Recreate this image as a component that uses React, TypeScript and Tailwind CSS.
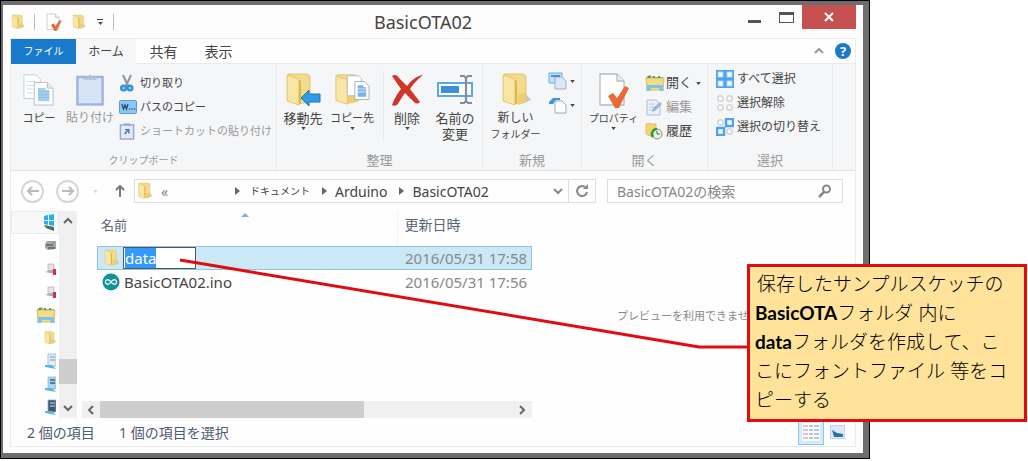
import { useEffect, useRef, type ReactNode } from 'react'
import clsx from 'clsx'

const ui = "font-['Noto_Sans','Noto_Sans_CJK_JP',sans-serif]"

const tabs = ['ホーム', '共有', '表示']

const files = [
  { name: 'data', date: '2016/05/31 17:58', folder: true },
  { name: 'BasicOTA02.ino', date: '2016/05/31 17:56', folder: false },
]

/* ---------- Icons ---------- */

function FolderShape() {
  return (
    <>
      <path d="M3 2h19l3 2v26l-12 2z" fill="#f2db8b" stroke="#d9b95c" strokeWidth=".7" />
      <path d="M12 7l4 2v22l-4 2z" fill="#d9b44a" />
      <path d="M2 3l9 3c2 1 3 2 3 4v23L2 29z" fill="#f9e6a4" stroke="#dcbc5e" strokeWidth=".8" />
    </>
  )
}

function Folder({ className }: { className?: string }) {
  return (
    <svg viewBox="0 0 30 36" className={className} aria-hidden="true">
      <path d="M18 33l12-5-6-7z" fill="#a9a9a9" opacity=".6" />
      <FolderShape />
      <path d="M17 23l8-3v9l-8 4z" fill="#eccf70" />
    </svg>
  )
}

function Page({ className, check }: { className?: string; check?: boolean }) {
  return (
    <svg viewBox="0 0 34 36" className={className} aria-hidden="true">
      <path d="M3 2h17l7 7v24H3z" fill="#fff" stroke="#b5bac2" strokeWidth="1.3" />
      <path d="M20 2v7h7" fill="#e9edf2" stroke="#b5bac2" strokeWidth="1.3" />
      {check && <path d="M11 24l5-3 4 5 8-12 4 2-10 20h-4z" fill="#e8693a" />}
    </svg>
  )
}

function CopyIcon() {
  return (
    <svg viewBox="0 0 34 34" className="h-8 w-8" aria-hidden="true">
      <path d="M1 1h13l5 5v20H1z" fill="#fff" stroke="#c4ccd6" />
      <path d="M4 8h9M4 12h9M4 16h7M4 20h7" stroke="#d2d8df" />
      <path d="M12 9h14l6 6v18H12z" fill="#fff" stroke="#b4bdc9" />
      <path d="M26 9v6h6" fill="#e6ebf1" stroke="#b4bdc9" />
      <path d="M16 15h8v2h4v12H16z" fill="#a5cdec" />
      <path d="M16 19h12M16 22h12M16 25h12" stroke="#8fbee2" />
    </svg>
  )
}

function PasteIcon() {
  return (
    <svg viewBox="0 0 30 34" className="h-8 w-7" aria-hidden="true">
      <rect x="1.5" y="3" width="27" height="29.500" fill="#d7e3f7" stroke="#9fb2d9" strokeWidth="2.500" />
      <path d="M8 6V3h4l3-3 3 3h4v3z" fill="#b4c0d8" />
    </svg>
  )
}

function Scissors() {
  return (
    <svg viewBox="0 0 16 18" className="h-[18px] w-4" aria-hidden="true">
      <path d="M4 1l5 11M12 1L7 12" stroke="#8797a8" strokeWidth="2" />
      <circle cx="4.500" cy="14" r="2.500" fill="#8ac8f0" stroke="#2f8fd4" strokeWidth="2" />
      <circle cx="11" cy="14" r="2.500" fill="#8ac8f0" stroke="#2f8fd4" strokeWidth="2" />
    </svg>
  )
}

function PathIcon() {
  return (
    <svg viewBox="0 0 18 14" className="h-[14px] w-[18px]" aria-hidden="true">
      <rect x=".5" y=".5" width="17" height="13" rx="1" fill="#8cc6f3" stroke="#5a9bd3" />
      <path d="M3 4l1.500 5L6 5l1.500 4L9 4" fill="none" stroke="#28435f" strokeWidth="1.2" />
      <path d="M10 9h1.500M12.500 9H14M15 9h1.500" stroke="#28435f" strokeWidth="1.2" />
    </svg>
  )
}

function ShortcutIcon() {
  return (
    <svg viewBox="0 0 16 18" className="h-[17px] w-4" aria-hidden="true">
      <rect x="1" y="2" width="14" height="15" fill="#e3eaf7" stroke="#96a8cf" strokeWidth="1.5" />
      <path d="M5 2V1h6v1z" fill="#96a8cf" stroke="#96a8cf" />
      <path d="M6 12c0-2 1-3 3-4M6 7h4v4" fill="none" stroke="#4e6fa8" strokeWidth="1.5" />
    </svg>
  )
}

function MoveTo() {
  return (
    <svg viewBox="0 0 36 36" className="h-9 w-9" aria-hidden="true">
      <FolderShape />
      <path d="M16 26l8-8v4h11v8H24v4z" fill="#2f9be6" stroke="#1a74b8" />
    </svg>
  )
}

function CopyTo() {
  return (
    <svg viewBox="0 0 38 36" className="h-9 w-9" aria-hidden="true">
      <FolderShape />
      <path d="M14 24h13v5l-13 4z" fill="#ecce70" />
      <path d="M14 3h12l3 3v18H14z" fill="#fff" stroke="#b4bdc9" />
      <path d="M22 9h10l5 5v14H22z" fill="#fff" stroke="#a7b0bd" />
      <path d="M25 13h6v2h3v10h-9z" fill="#7db4e6" />
      <path d="M25 17h9M25 20h9" stroke="#fff" strokeWidth=".7" />
    </svg>
  )
}

function DeleteIcon() {
  return (
    <svg viewBox="0 0 36 36" className="h-9 w-9" aria-hidden="true">
      <path d="M3 4c3-2 5-1 7 2l8 8c4-5 9-10 16-11-5 4-9 8-13 14l10 13c-2 2-4 2-6 0l-9-9c-3 4-5 8-8 12-2 1-4 1-5 0 2-6 5-11 9-16z" fill="#d2342a" />
    </svg>
  )
}

function RenameIcon() {
  return (
    <svg viewBox="0 0 36 32" className="h-8 w-9" aria-hidden="true">
      <rect x="1" y="9" width="34" height="13" fill="#fff" stroke="#5aa9e4" strokeWidth="2" />
      <rect x="4" y="12" width="18" height="7" fill="#3f8fd6" />
      <path d="M23 2h4l2 2 2-2h4M29 3v26M23 29h4l2-2 2 2h4" fill="none" stroke="#858c95" strokeWidth="2.200" />
    </svg>
  )
}

function NewItem({ plain }: { plain?: boolean }) {
  return (
    <svg viewBox="0 0 20 18" className="h-[18px] w-5" aria-hidden="true">
      {plain ? (
        <path d="M1 6l4-4h7v2H8L5 8H1z" fill="#3b94dc" />
      ) : (
        <path d="M1 1h13v10H1z" fill="#bfe0f5" stroke="#6aaee0" />
      )}
      <path d="M7 5h7l4 4v8H7z" fill={plain ? '#fff' : '#dbe8f3'} stroke="#a0abb8" />
      {!plain && <path d="M3 4h9" stroke="#3b94dc" strokeWidth="2" />}
    </svg>
  )
}

function OpenIcon() {
  return (
    <svg viewBox="0 0 20 18" className="h-[18px] w-5" aria-hidden="true">
      <path d="M1 3l4-2 3 2h10v3H1z" fill="#a3b08a" />
      <path d="M1 4h18l-1 12H2z" fill="#f3dd83" stroke="#cfb254" strokeWidth=".8" />
      <path d="M3 3h2M8 3h2M13 3h2" stroke="#3f7f57" strokeWidth="1.5" />
      <path d="M2 11h16v3l1 3h-4l-1-3H6l-1 3H1l1-3z" fill="#7cc5ea" />
    </svg>
  )
}

function EditIcon() {
  return (
    <svg viewBox="0 0 18 18" className="h-[18px] w-[18px]" aria-hidden="true">
      <path d="M2 2h9l4 4v11H2z" fill="#eaf1f9" stroke="#a9bdd6" />
      <path d="M4 6h6M4 9h5M4 12h4" stroke="#b6c8de" />
      <path d="M7 14l1-4 7-6 2 2-7 7z" fill="#9fb5d0" />
    </svg>
  )
}

function HistoryIcon() {
  return (
    <svg viewBox="0 0 18 18" className="h-[18px] w-[18px]" aria-hidden="true">
      <path d="M1 2l4-1 1 1h5v11l-6 1-4-2z" fill="#f1d56f" stroke="#d6b450" strokeWidth=".7" />
      <circle cx="12" cy="12" r="5" fill="#e8f2ea" stroke="#7f9a86" />
      <path d="M12 7a5 5 0 0 0-4 8" fill="none" stroke="#29a03a" strokeWidth="2.500" />
      <path d="M12 9v3h3" fill="none" stroke="#4f6557" />
    </svg>
  )
}

function SelectIcon({ kind }: { kind: 'all' | 'none' | 'invert' }) {
  const cells = [
    [1, 1],
    [10, 1],
    [1, 10],
    [10, 10],
  ]
  return (
    <svg viewBox="0 0 18 18" className="h-[18px] w-[18px]" aria-hidden="true">
      {kind === 'all' && <rect width="18" height="18" fill="#4ba3f5" />}
      {cells.map(([x, y], i) => {
        const on = kind === 'invert' && (i === 1 || i === 2)
        if (on) return <rect key={i} x={x} y={y} width="7" height="7" fill="#fff" stroke="#4ba3f5" strokeWidth="2.500" />
        if (kind === 'all') return <rect key={i} x={x + 1} y={y + 1} width="5" height="5" fill="#fff" stroke="#a9d3fa" />
        return <rect key={i} x={x + 1} y={y + 1} width="5" height="5" rx="1" fill="#fff" stroke="#bcbcbc" />
      })}
    </svg>
  )
}

function Chevron({ dir, className }: { dir: 'up' | 'down' | 'left' | 'right'; className?: string }) {
  const d = {
    up: 'M2 8l4-4 4 4',
    down: 'M2 4l4 4 4-4',
    left: 'M8 2L4 6l4 4',
    right: 'M4 2l4 4-4 4',
  }[dir]
  return (
    <svg viewBox="0 0 12 12" className={clsx('h-3 w-3 shrink-0', className)} aria-hidden="true">
      <path d={d} fill="none" stroke="currentColor" strokeWidth="2" />
    </svg>
  )
}

function Caret({ className }: { className?: string }) {
  return (
    <svg viewBox="0 0 6 4" className={clsx('h-[3px] w-[5px] shrink-0', className)} aria-hidden="true">
      <path d="M0 0h6L3 4z" fill="#444" />
    </svg>
  )
}

function Crumb() {
  return (
    <svg viewBox="0 0 5 8" className="h-2 w-[5px] shrink-0" aria-hidden="true">
      <path d="M0 0l5 4-5 4z" fill="#666" />
    </svg>
  )
}

function ArduinoIcon() {
  return (
    <svg viewBox="0 0 18 18" className="h-[18px] w-[18px]" aria-hidden="true">
      <circle cx="9" cy="9" r="8.500" fill="#129299" />
      <path d="M9 9C7.500 6.500 3.500 5.500 3.500 9S7.500 11.500 9 9s5.500-3.500 5.500 0S10.500 11.500 9 9z" fill="none" stroke="#e4f5f5" strokeWidth="1.3" />
    </svg>
  )
}

function DriveIcon({ kind }: { kind: string }) {
  return (
    <svg viewBox="0 0 12 18" className="h-[18px] w-3" aria-hidden="true">
      {kind === 'pc' && (
        <>
          <path d="M1 2l4-1v5H1zM6 1l5-1v6H6zM1 7h4v4l-4-1zM6 7h5v5l-5-1z" fill="#24b1ee" />
          <path d="M1 11l10 2v4L3 14z" fill="#4d6b62" />
        </>
      )}
      {kind === 'disk' && (
        <>
          <path d="M1 7l2-3h9v8l-8 1-3-2z" fill="#a4a7a8" />
          <path d="M2 8h7M4 11h7" stroke="#5c6161" strokeWidth="1.5" />
          <path d="M8 6h3" stroke="#7cae62" strokeWidth="1.5" />
        </>
      )}
      {kind === 'net' && (
        <>
          <path d="M4 4h6v7H4z" fill="#e7e1e3" stroke="#b7afb2" strokeWidth=".7" />
          <path d="M1 12l6-2h5v4z" fill="#a9adb0" />
          <path d="M9 9h3v6H9z" fill="#c9324c" />
        </>
      )}
      {(kind === 'doc' || kind === 'img' || kind === 'dev') && (
        <>
          <path d="M4 2h8v12H4z" fill={kind === 'doc' ? '#e3ecf5' : kind === 'img' ? '#a9d6ee' : '#46596b'} stroke="#8eb0ca" strokeWidth=".7" />
          <path d="M6 5h5M6 8h5" stroke={kind === 'img' ? '#35607f' : '#8fb6d8'} strokeWidth="1.500" />
          <path d="M1 13h7l4 4-11-2z" fill="#5fb4e4" />
        </>
      )}
    </svg>
  )
}

/* ---------- Ribbon ---------- */

type GroupProps = { label: string; className: string; small?: boolean; children: ReactNode }

function Group({ label, className, small, children }: GroupProps) {
  return (
    <section className={clsx('flex shrink-0 flex-col border-r border-[#e9eaeb] pt-[7px] pb-0.5', className)}>
      <div className="flex flex-1">{children}</div>
      <h2 className={clsx('text-center leading-4 text-[#999]', small ? 'text-[10px]' : 'text-[13px]')}>{label}</h2>
    </section>
  )
}

type BigProps = { icon: ReactNode; lines: string[]; className: string; text?: string; caret?: boolean; disabled?: boolean }

function Big({ icon, lines, className, text = 'text-[13px]', caret, disabled }: BigProps) {
  return (
    <button type="button" disabled={disabled} className={clsx('flex shrink-0 flex-col items-center whitespace-nowrap', className)}>
      <span className="flex h-[38px] items-center">{icon}</span>
      {lines.map((line) => (
        <span key={line} className={clsx('h-4 leading-[18px]', line === 'フォルダー' ? 'text-[10px]' : text, disabled ? 'text-[#999]' : 'text-[#444]')}>
          {line}
        </span>
      ))}
      {caret && <Caret className="mt-0.5" />}
    </button>
  )
}

type SmallProps = { icon: ReactNode; label: string; text?: string; caret?: boolean; disabled?: boolean }

function Small({ icon, label, text = 'text-[12px]', caret, disabled }: SmallProps) {
  return (
    <button type="button" disabled={disabled} className={clsx('flex h-6 items-center whitespace-nowrap', text, disabled ? 'text-[#999]' : 'text-[#444]')}>
      <span className="flex w-[21px] shrink-0">{icon}</span>
      {label}
      {caret && <Caret className="ml-1" />}
    </button>
  )
}

function Ribbon() {
  return (
    <div className="flex h-[107px] overflow-hidden border-b border-[#e3e4e5] bg-[#f5f6f7]">
      <Group label="クリップボード" small className="w-[266px]">
        <Big icon={<CopyIcon />} lines={['コピー']} text="text-[11px]" className="w-[56px]" />
        <Big icon={<PasteIcon />} lines={['貼り付け']} text="text-[12px]" disabled className="w-[46px]" />
        <div className="flex flex-col pl-1.5">
          <Small icon={<Scissors />} label="切り取り" text="text-[11px]" />
          <Small icon={<PathIcon />} label="パスのコピー" text="text-[11px]" />
          <Small icon={<ShortcutIcon />} label="ショートカットの貼り付け" text="text-[11px]" disabled />
        </div>
      </Group>
      <Group label="整理" className="w-[206px]">
        <Big icon={<MoveTo />} lines={['移動先']} caret className="w-[52px]" />
        <Big icon={<CopyTo />} lines={['コピー先']} text="text-[11px]" caret className="w-[46px]" />
        <div className="ml-2 h-[68px] border-l border-[#e6e7e8]" />
        <Big icon={<DeleteIcon />} lines={['削除']} caret className="w-[46px]" />
        <Big icon={<RenameIcon />} lines={['名前の', '変更']} className="w-[50px]" />
      </Group>
      <Group label="新規" className="w-[99px]">
        <Big icon={<Folder className="h-9 w-[30px]" />} lines={['新しい', 'フォルダー']} text="text-[12px]" className="w-[65px]" />
        <div className="flex flex-col">
          <button type="button" aria-label="新しいアイテム" className="flex h-5 items-center gap-0.5">
            <NewItem />
            <Caret />
          </button>
          <button type="button" aria-label="ショートカット" className="mt-1 flex h-5 items-center gap-0.5">
            <NewItem plain />
            <Caret />
          </button>
        </div>
      </Group>
      <Group label="開く" className="w-[126px]">
        <Big icon={<Page check className="h-9 w-[34px]" />} lines={['プロパティ']} text="text-[10px]" caret className="w-[63px]" />
        <div className="flex flex-col">
          <Small icon={<OpenIcon />} label="開く" text="text-[13px]" caret />
          <Small icon={<EditIcon />} label="編集" text="text-[13px]" disabled />
          <Small icon={<HistoryIcon />} label="履歴" text="text-[13px]" />
        </div>
      </Group>
      <Group label="選択" className="w-[125px]">
        <div className="-mt-1 flex flex-col pl-2">
          <Small icon={<SelectIcon kind="all" />} label="すべて選択" />
          <Small icon={<SelectIcon kind="none" />} label="選択解除" />
          <Small icon={<SelectIcon kind="invert" />} label="選択の切り替え" />
        </div>
      </Group>
    </div>
  )
}

/* ---------- Window parts ---------- */

function TitleBar() {
  return (
    <header className="flex h-[33px]">
      <div className="flex w-[104px] items-center">
        <Folder className="h-4 w-4" />
        <span className="ml-2 h-4 border-l border-[#bbb]" />
        <Page check className="ml-2.5 h-[18px] w-[18px]" />
        <Folder className="ml-2 h-4 w-4" />
        <button type="button" aria-label="クイック アクセスのカスタマイズ" className="ml-2.5 flex flex-col items-center gap-0.5">
          <span className="w-1.5 border-t border-[#444]" />
          <Caret />
        </button>
        <span className="ml-auto h-4 border-l border-[#bbb]" />
      </div>
      <h1 className="flex flex-1 items-center justify-center text-[18px] leading-6 text-[#444]">BasicOTA02</h1>
      <div className="flex w-[124px] items-start justify-end">
        <button type="button" aria-label="最小化" className="flex h-6 w-[31px] items-center justify-center pt-2">
          <span className="h-[3px] w-[13px] bg-[#555]" />
        </button>
        <button type="button" aria-label="最大化" className="flex h-6 w-8 items-center justify-center">
          <span className="h-[11px] w-[15px] border border-t-[3px] border-[#555]" />
        </button>
        <button type="button" aria-label="閉じる" className="flex h-6 w-[54px] items-center justify-center bg-[#c75050]">
          <svg viewBox="0 0 10 10" className="h-2.5 w-2.5" aria-hidden="true">
            <path d="M1 1l8 8M9 1L1 9" stroke="#fff" strokeWidth="2" />
          </svg>
        </button>
      </div>
    </header>
  )
}

function Tabs() {
  return (
    <nav className="flex h-[25px] items-stretch text-[#444]">
      <button type="button" className="w-[65px] bg-[#1979ca] text-[10px] text-white">
        ファイル
      </button>
      {tabs.map((tab, i) => (
        <button
          key={tab}
          type="button"
          className={clsx(
            i === 0 ? 'w-[60px] bg-[#f5f6f7] text-[12px]' : 'w-[55px] border-b border-[#e9eaeb] text-[14px]'
          )}
        >
          {tab}
        </button>
      ))}
      <div className="flex flex-1 items-center justify-end gap-2.5 border-b border-[#e9eaeb] pr-1">
        <button type="button" aria-label="リボンの最小化" className="text-[#999]">
          <Chevron dir="up" />
        </button>
        <button type="button" aria-label="ヘルプ" className="h-4 w-4 rounded-full bg-[#1979ca] text-[13px] leading-4 font-bold text-white">
          ?
        </button>
      </div>
    </nav>
  )
}

function AddressBar() {
  return (
    <div className="flex h-10 items-center pr-3 pl-2.5 text-[14px] text-[#444]">
      <button type="button" aria-label="戻る" className="flex h-[23px] w-[23px] items-center justify-center rounded-full border-2 border-[#d6d6d6] text-[#bbb]">
        <svg viewBox="0 0 12 12" className="h-3 w-3" aria-hidden="true">
          <path d="M12 6H1M5 2L1 6l4 4" fill="none" stroke="currentColor" strokeWidth="2" />
        </svg>
      </button>
      <button type="button" aria-label="進む" className="ml-3 flex h-[23px] w-[23px] items-center justify-center rounded-full border-2 border-[#d6d6d6] text-[#bbb]">
        <svg viewBox="0 0 12 12" className="h-3 w-3" aria-hidden="true">
          <path d="M0 6h11M7 2l4 4-4 4" fill="none" stroke="currentColor" strokeWidth="2" />
        </svg>
      </button>
      <Caret className="ml-3.5 opacity-20" />
      <button type="button" aria-label="上へ" className="ml-4 text-[#777]">
        <svg viewBox="0 0 12 12" className="h-3 w-3" aria-hidden="true">
          <path d="M6 12V1M2 5l4-4 4 4" fill="none" stroke="currentColor" strokeWidth="2" />
        </svg>
      </button>
      <div className="ml-2 flex h-6 min-w-0 flex-1 items-center overflow-hidden border border-[#dedede] pl-0.5 whitespace-nowrap">
        <Folder className="h-[18px] w-4 shrink-0" />
        <span className="ml-2 w-[74px] text-[#888]">«</span>
        <Crumb />
        <a href="#documents" className="mx-2 ml-2.5 text-[10px]">ドキュメント</a>
        <span className="ml-1 flex">
          <Crumb />
        </span>
        <a href="#arduino" className="mr-3 ml-2">Arduino</a>
        <Crumb />
        <a href="#basicota02" className="ml-2">BasicOTA02</a>
        <button type="button" aria-label="以前の場所" className="ml-auto pr-1 text-[#888]">
          <Chevron dir="down" />
        </button>
        <button type="button" aria-label="最新の情報に更新" className="flex h-full w-[27px] items-center justify-center border-l border-[#dedede] text-[#888]">
          <svg viewBox="0 0 14 14" className="h-3.5 w-3.5" aria-hidden="true">
            <path d="M12 8a5 5 0 1 1-2-5" fill="none" stroke="currentColor" strokeWidth="2" />
            <path d="M8 5h5V0z" fill="currentColor" />
          </svg>
        </button>
      </div>
      <label className="ml-[11px] flex h-6 w-[236px] items-center border border-[#dedede] pr-2.5 pl-[9px]">
        <input
          type="search"
          aria-label="検索"
          placeholder="BasicOTA02の検索"
          className="min-w-0 flex-1 text-[14px] outline-none placeholder:text-[#888]"
        />
        <svg viewBox="0 0 14 14" className="h-3.5 w-3.5" aria-hidden="true">
          <circle cx="8.500" cy="5" r="3.500" fill="none" stroke="#888" strokeWidth="2" />
          <path d="M6 8l-5 5" stroke="#888" strokeWidth="2.500" />
        </svg>
      </label>
    </div>
  )
}

const tree = ['pc', 'disk', 'net', 'net', 'user', 'folder', 'doc', 'img', 'dev']

function TreePane() {
  return (
    <aside className="flex w-[66px] shrink-0">
      <ul className="flex-1">
        {tree.map((kind, i) => (
          <li key={i} className={clsx('flex h-[23px] items-center justify-end pr-[3px]', i === 0 && 'border border-[#ececec] bg-[#f8f8f8]')}>
            {kind === 'user' && <OpenIcon />}
            {kind === 'folder' && <Folder className="h-[18px] w-3" />}
            {kind !== 'user' && kind !== 'folder' && <DriveIcon kind={kind} />}
          </li>
        ))}
      </ul>
      <div className="flex w-[18px] flex-col items-center bg-[#f0f0f0] pt-1 pb-1 text-[#666]">
        <Chevron dir="up" />
        <div className="mt-auto mb-[18px] h-[25px] w-full bg-[#cdcdcd]" />
        <Chevron dir="down" />
      </div>
    </aside>
  )
}

function FileList() {
  const rename = useRef<HTMLInputElement>(null)

  useEffect(() => {
    rename.current?.focus()
    rename.current?.select()
  }, [])

  return (
    <div className="flex min-w-0 flex-1 flex-col">
      <div className="flex-1 pl-5">
        <table className="w-full table-fixed border-collapse text-left">
          <thead>
            <tr className="h-[35px] align-top text-[#5a6478]">
              <th className="pt-1 pl-1 text-[13px] leading-5 font-normal">
                <div className="flex">
                  <span className="w-[140px]">名前</span>
                  <svg viewBox="0 0 8 4" className="-mt-0.5 h-1 w-2" aria-hidden="true">
                    <path d="M0 4l4-4 4 4z" fill="#7fb2cd" />
                  </svg>
                </div>
              </th>
              <th className="w-[135px] border-l border-[#f3f3f3] pt-1 pl-[7px] text-[14px] leading-5 font-normal">更新日時</th>
            </tr>
          </thead>
          <tbody>
            {files.map((file) => (
              <tr key={file.name} className={clsx('h-6', file.folder && 'bg-[#cbe8f6] outline -outline-offset-1 outline-[#8cc6e3]')}>
                <td className="p-0">
                  <div className="flex h-6 items-center pl-[5px]">
                    {file.folder ? (
                      <>
                        <Folder className="ml-0.5 h-[18px] w-[15px]" />
                        <input
                          ref={rename}
                          type="text"
                          aria-label="名前の変更"
                          defaultValue={file.name}
                          className="ml-1 h-[22px] w-[73px] border border-[#555] bg-white px-px text-[15px] text-[#333] outline-none selection:bg-[#3399ff] selection:text-white"
                        />
                      </>
                    ) : (
                      <>
                        <ArduinoIcon />
                        <span className="ml-1 text-[15px] text-[#444]">{file.name}</span>
                      </>
                    )}
                  </div>
                </td>
                <td className="p-0 pl-2 text-[15px] whitespace-nowrap text-[#888]">{file.date}</td>
              </tr>
            ))}
          </tbody>
        </table>
      </div>
      <div className="ml-[5px] flex h-[17px] items-center bg-[#f0f0f0] text-[#666]">
        <Chevron dir="left" className="mx-[3px]" />
        <div className="h-full w-[264px] bg-[#cdcdcd]" />
        <Chevron dir="right" className="mr-1 ml-auto" />
      </div>
    </div>
  )
}

function StatusBar() {
  return (
    <footer className="flex h-7 items-center pr-2.5 pl-4 text-[14px] text-[#4f5b70]">
      <span className="w-[92px]">2 個の項目</span>
      <span>1 個の項目を選択</span>
      <button type="button" aria-label="詳細" className="ml-auto flex h-[26px] w-[26px] items-center justify-center border border-[#8cc8ea] bg-[#d3ecf9]">
        <svg viewBox="0 0 18 18" className="h-[18px] w-[18px]" aria-hidden="true">
          <path d="M0 0h18v18H0z" fill="#f7fbfd" />
          <path d="M1 3h5M1 7h5M1 11h5M1 15h5" stroke="#d58a8a" />
          <path d="M7 3h4M12 3h5M7 7h4M12 7h5M7 11h4M12 11h5M7 15h4M12 15h5" stroke="#7f93a8" />
        </svg>
      </button>
      <button type="button" aria-label="大きいアイコン" className="ml-1.5">
        <svg viewBox="0 0 15 14" className="h-3.5 w-[15px]" aria-hidden="true">
          <path d="M.5.5h14v13H.5z" fill="#dcebf7" stroke="#c3d3e2" />
          <path d="M2 5l5 3 6 1v3H4z" fill="#2f6fa8" />
        </svg>
      </button>
    </footer>
  )
}

function Callout() {
  return (
    <>
      <svg
        viewBox="0 0 568 88"
        preserveAspectRatio="none"
        className="pointer-events-none absolute top-[260px] right-[280px] left-[180px] h-[88px] w-[calc(100%-460px)] overflow-visible"
        aria-hidden="true"
      >
        <path d="M0 0l519 87h49" fill="none" stroke="#e30b10" strokeWidth="3" vectorEffect="non-scaling-stroke" />
      </svg>
      <aside className="absolute top-[264px] right-px w-[280px] border-3 border-[#e30b10] bg-[#ffe39b] px-[5px] pt-[2px] pb-[5px] font-['Lato','Noto_Sans_CJK_JP',sans-serif] text-[19px] leading-[29px] font-light whitespace-nowrap text-black">
        <p className="pl-0.5">保存したサンプルスケッチの</p>
        <p>
          <b className="font-bold">BasicOTA</b>フォルダ 内に
        </p>
        <p>
          <b className="font-bold">data</b>フォルダを作成して、こ
        </p>
        <p>こにフォントファイル 等をコ</p>
        <p>ピーする</p>
      </aside>
    </>
  )
}

export default function App() {
  return (
    <div lang="ja" className={clsx('relative bg-white', ui)}>
      <div className="mr-[158px] border border-black">
        <main className="border-t-4 border-r-6 border-b-5 border-l-2 border-[#6f6d70] bg-[#fdfdfd] pr-[7px] pb-1.5 pl-[7px]">
          <TitleBar />
          <div className="border border-[#ebebeb] bg-[#fefefe]">
            <Tabs />
            <Ribbon />
            <AddressBar />
            <div className="flex">
              <TreePane />
              <FileList />
              <section className="w-[323px] shrink-0 overflow-hidden pt-[97px] pl-[85px] text-[11px] leading-4 whitespace-nowrap text-[#888]">
                プレビューを利用できませ
              </section>
            </div>
            <StatusBar />
          </div>
        </main>
      </div>
      <Callout />
    </div>
  )
}
